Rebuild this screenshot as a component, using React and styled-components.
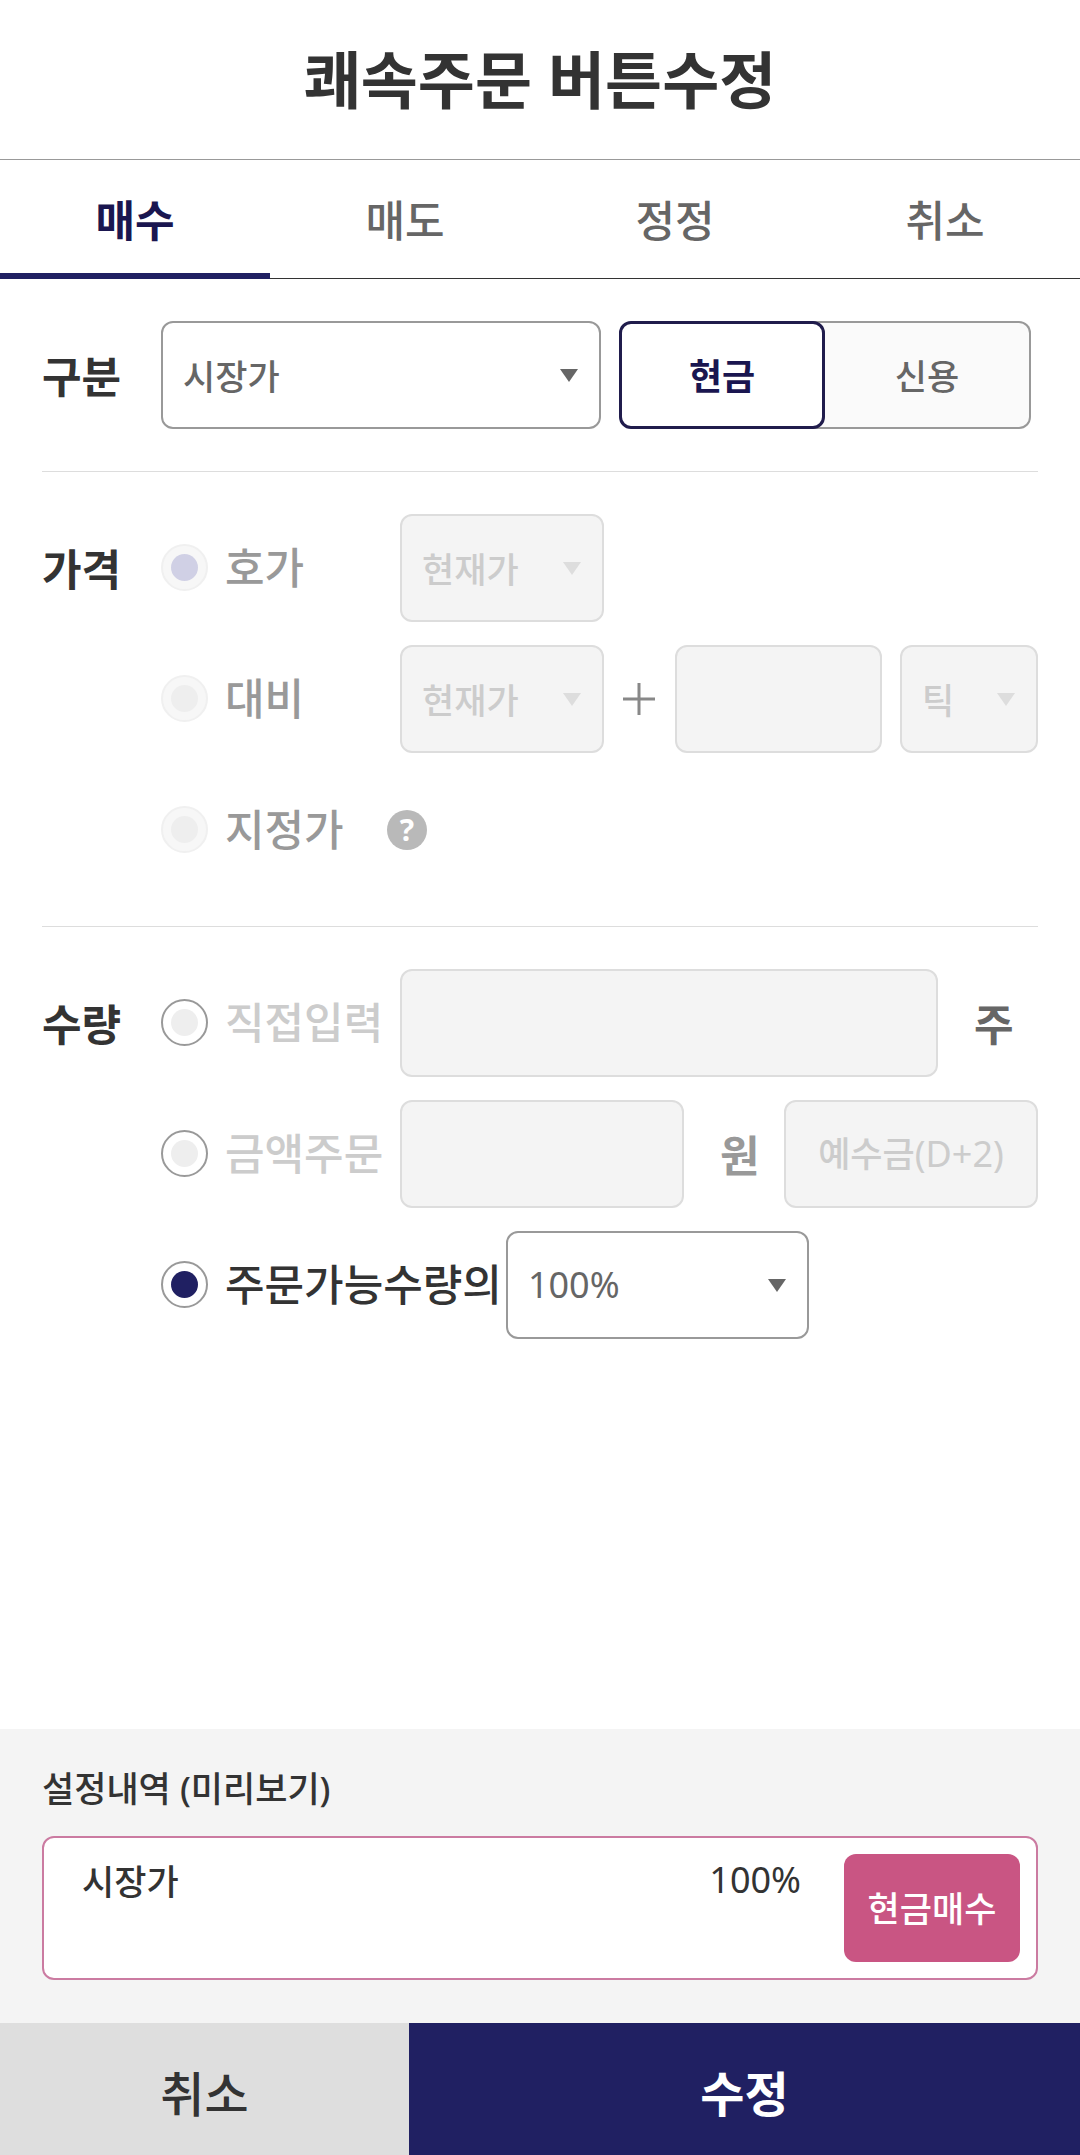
import React, { useState } from "react";
import styled, { createGlobalStyle, css } from "styled-components";

const GlobalStyle = createGlobalStyle`
  *, *::before, *::after { box-sizing: border-box; }
  body {
    margin: 0;
    background: #fff;
    color: #333;
    font-family: "Noto Sans", "Noto Sans CJK KR", sans-serif;
    font-size: 35px;
  }
  button, input, select { font: inherit; color: inherit; margin: 0; }
  button { cursor: pointer; }
`;

const Screen = styled.div`
  display: flex;
  flex-direction: column;
  min-height: 100vh;
`;

const Header = styled.header`
  display: flex;
  align-items: center;
  justify-content: center;
  height: 160px;
  border-bottom: 1px solid #999;
`;

const Title = styled.h1`
  margin: 0;
  font-size: 62px;
  line-height: 72px;
  font-weight: 700;
`;

const Tabs = styled.nav`
  display: grid;
  grid-template-columns: repeat(4, 1fr);
  height: 119px;
`;

const Tab = styled.button`
  border: 0;
  border-bottom: ${(p) => (p.$active ? "6px solid #202062" : "1px solid #333")};
  padding: ${(p) => (p.$active ? "4px 0 0" : "0 0 1px")};
  background: none;
  && {
    font-size: 43px;
    font-weight: ${(p) => (p.$active ? 700 : 500)};
    color: ${(p) => (p.$active ? "#1a1650" : "#666")};
  }
`;

const Form = styled.main`
  flex: 1;
  padding: 0 42px;
`;

const Section = styled.section`
  display: grid;
  grid-template-columns: 119px minmax(0, 1fr);
  padding: 42px 0;
  & + & { border-top: 1px solid #ddd; }
`;

const SectionTitle = styled.h2`
  margin: 0;
  padding-top: 2px;
  font-size: 43px;
  line-height: 108px;
  height: 108px;
  font-weight: 700;
`;

const Rows = styled.div`
  display: flex;
  flex-direction: column;
  gap: 23px;
`;

const Row = styled.div`
  display: flex;
  align-items: center;
  height: 108px;
`;

const field = css`
  width: 100%;
  height: 108px;
  border: 2px solid #999;
  border-radius: 12px;
  background: #fff;
  color: #666;
  &:disabled {
    border-color: #ddd;
    background: #f4f4f4;
    color: #ccc;
    opacity: 1;
    cursor: default;
  }
`;

const SelectBox = styled.div`
  display: grid;
  align-items: center;
  flex: ${(p) => (p.$width ? `0 0 ${p.$width}px` : "1 1 0")};
  margin-left: ${(p) => p.$gap || 0}px;
  & > * { grid-area: 1 / 1; }
`;

const StyledSelect = styled.select`
  ${field}
  appearance: none;
  padding: ${(p) => (p.$numeric ? "0 44px 2px 20px" : "2px 44px 0 20px")};
  && {
    font-size: ${(p) => (p.$numeric ? 36 : 35)}px;
    font-weight: ${(p) => (p.$numeric ? 400 : 500)};
  }
`;

const Arrow = styled.svg`
  justify-self: end;
  width: 18px;
  height: 13px;
  margin-right: 23px;
  fill: ${(p) => (p.$disabled ? "#ddd" : "#666")};
  pointer-events: none;
`;

const TextInput = styled.input`
  ${field}
  flex: 1 1 0;
  width: 0;
  min-width: 0;
  padding: 0 22px;
`;

const BalanceButton = styled.button`
  ${field}
  flex: 0 0 254px;
  padding: 0 0 4px;
  font-weight: 500;
`;

const Latin = styled.span`
  font-size: 36px;
  font-weight: 400;
`;

const Segments = styled.div`
  display: grid;
  grid-template-columns: 1fr 1fr;
  flex: 0 0 412px;
  margin: 0 7px 0 18px;
`;

const Segment = styled.button`
  height: 108px;
  border: 2px solid #999;
  ${(p) =>
    p.$first
      ? css`
          margin-right: -12px;
          padding: 0 12px 2px 0;
          border-right: 0;
          border-radius: 12px 0 0 12px;
        `
      : css`
          margin-left: -12px;
          padding: 0 0 2px 12px;
          border-left: 0;
          border-radius: 0 12px 12px 0;
        `}
  && {
    background: #fafafa;
    font-weight: 500;
    color: #666;
  }
  ${(p) =>
    p.$active &&
    css`
      && {
        z-index: 1;
        margin: 0;
        padding: 0 0 2px;
        background: #fff;
        border: 3px solid #201c4c;
        border-radius: 12px;
        font-size: 36px;
        font-weight: 700;
        color: #1a1650;
      }
    `}
`;

const Option = styled.label`
  display: flex;
  align-items: center;
  gap: 17px;
  flex: ${(p) => (p.$auto ? "0 0 auto" : "0 0 239px")};
  margin-right: ${(p) => (p.$auto ? 4 : 0)}px;
  padding-bottom: 2px;
  font-size: 43px;
  font-weight: 500;
  white-space: nowrap;
  color: ${(p) => p.$color};
`;

const OptionText = styled.span`
  padding-bottom: 3px;
`;

const Radio = styled.input`
  appearance: none;
  display: grid;
  place-items: center;
  flex: none;
  width: 47px;
  height: 47px;
  border: 2px solid #999;
  border-radius: 50%;
  background: #fff;
  &::before {
    content: "";
    width: 27px;
    height: 27px;
    border-radius: 50%;
    background: #eee;
  }
  &:checked::before { background: #202062; }
  &:disabled { border-color: #f0f0f0; background: #f7f7f7; }
  &:disabled:checked::before { background: #d0d0e5; }
`;

const PlusIcon = styled.svg`
  flex: none;
  width: 32px;
  height: 32px;
  margin: 0 20px 0 19px;
  stroke: #888;
  stroke-width: 3;
`;

const HelpButton = styled.button`
  display: grid;
  place-items: center;
  width: 40px;
  height: 40px;
  margin-left: -13px;
  padding: 0;
  border: 0;
  border-radius: 50%;
  background: #b9b9b9;
  && { color: #fff; font-size: 30px; font-weight: 700; line-height: 40px; }
`;

const Unit = styled.span`
  flex: none;
  width: 100px;
  padding: 0 0 2px 36px;
  font-size: 43px;
  font-weight: 700;
  color: ${(p) => p.$color};
`;

const Preview = styled.section`
  padding: 34px 42px 43px;
  background: #f4f4f4;
`;

const PreviewTitle = styled.h2`
  margin: 0 0 21px;
  font-size: 35px;
  line-height: 52px;
  font-weight: 500;
`;

const PreviewCard = styled.div`
  display: flex;
  align-items: flex-start;
  height: 144px;
  padding: 16px;
  border: 2px solid #cb7ba1;
  border-radius: 12px;
  background: #fff;
  line-height: 52px;
`;

const PreviewType = styled.span`
  flex: 1;
  padding: 2px 0 0 22px;
  font-weight: 500;
`;

const PreviewAmount = styled.span`
  margin-right: 43px;
  font-size: 36px;
`;

const OrderButton = styled.button`
  width: 176px;
  height: 108px;
  padding: 2px 0 0;
  border: 0;
  border-radius: 12px;
  background: #c95583;
  && { color: #fff; font-weight: 500; }
`;

const Actions = styled.footer`
  display: grid;
  grid-template-columns: 39fr 64fr;
`;

const ActionButton = styled.button`
  height: 132px;
  padding: 4px 0 0;
  border: 0;
  background: ${(p) => (p.$primary ? "#202062" : "#dedede")};
  && {
    font-size: 48px;
    font-weight: ${(p) => (p.$primary ? 700 : 500)};
    color: ${(p) => (p.$primary ? "#fff" : "#333")};
  }
`;

function Select({ label, options, width, gap, disabled, numeric }) {
  return (
    <SelectBox $width={width} $gap={gap}>
      <StyledSelect aria-label={label} disabled={disabled} $numeric={numeric}>
        {options.map((o) => (
          <option key={o}>{o}</option>
        ))}
      </StyledSelect>
      <Arrow $disabled={disabled} viewBox="0 0 18 13" aria-hidden="true">
        <path d="M0 0h18L9 13z" />
      </Arrow>
    </SelectBox>
  );
}

const TABS = ["매수", "매도", "정정", "취소"];
const FUNDS = ["현금", "신용"];

export default function App() {
  const [tab, setTab] = useState("매수");
  const [fund, setFund] = useState("현금");
  const [amount, setAmount] = useState("ratio");

  const amountRadio = (value) => (
    <Radio
      type="radio"
      name="amount"
      checked={amount === value}
      onChange={() => setAmount(value)}
    />
  );

  return (
    <Screen>
      <GlobalStyle />
      <Header>
        <Title>쾌속주문 버튼수정</Title>
      </Header>
      <Tabs>
        {TABS.map((t) => (
          <Tab key={t} type="button" $active={t === tab} onClick={() => setTab(t)}>
            {t}
          </Tab>
        ))}
      </Tabs>

      <Form>
        <Section>
          <SectionTitle>구분</SectionTitle>
          <Row>
            <Select label="구분" options={["시장가"]} />
            <Segments>
              {FUNDS.map((f, i) => (
                <Segment
                  key={f}
                  type="button"
                  aria-pressed={f === fund}
                  $first={i === 0}
                  $active={f === fund}
                  onClick={() => setFund(f)}
                >
                  {f}
                </Segment>
              ))}
            </Segments>
          </Row>
        </Section>

        <Section>
          <SectionTitle>가격</SectionTitle>
          <Rows>
            <Row>
              <Option $color="#999">
                <Radio type="radio" name="price" defaultChecked disabled />
                <OptionText>호가</OptionText>
              </Option>
              <Select label="호가 기준" options={["현재가"]} width={204} disabled />
            </Row>
            <Row>
              <Option $color="#999">
                <Radio type="radio" name="price" disabled />
                <OptionText>대비</OptionText>
              </Option>
              <Select label="대비 기준" options={["현재가"]} width={204} disabled />
              <PlusIcon viewBox="0 0 32 32" aria-hidden="true">
                <path d="M0 16h32M16 0v32" />
              </PlusIcon>
              <TextInput aria-label="대비 값" disabled />
              <Select label="대비 단위" options={["틱"]} width={138} gap={18} disabled />
            </Row>
            <Row>
              <Option $color="#999">
                <Radio type="radio" name="price" disabled />
                <OptionText>지정가</OptionText>
              </Option>
              <HelpButton type="button">?</HelpButton>
            </Row>
          </Rows>
        </Section>

        <Section>
          <SectionTitle>수량</SectionTitle>
          <Rows>
            <Row>
              <Option $color="#ccc">
                {amountRadio("direct")}
                <OptionText>직접입력</OptionText>
              </Option>
              <TextInput aria-label="수량" disabled />
              <Unit $color="#666">주</Unit>
            </Row>
            <Row>
              <Option $color="#ccc">
                {amountRadio("cash")}
                <OptionText>금액주문</OptionText>
              </Option>
              <TextInput aria-label="금액" disabled />
              <Unit $color="#999">원</Unit>
              <BalanceButton type="button" disabled>
                예수금<Latin>(D+2)</Latin>
              </BalanceButton>
            </Row>
            <Row>
              <Option $color="#333" $auto>
                {amountRadio("ratio")}
                <OptionText>주문가능수량의</OptionText>
              </Option>
              <Select label="주문가능수량 비율" options={["100%"]} width={303} numeric />
            </Row>
          </Rows>
        </Section>
      </Form>

      <Preview>
        <PreviewTitle>설정내역 (미리보기)</PreviewTitle>
        <PreviewCard>
          <PreviewType>시장가</PreviewType>
          <PreviewAmount>100%</PreviewAmount>
          <OrderButton type="button">현금매수</OrderButton>
        </PreviewCard>
      </Preview>

      <Actions>
        <ActionButton type="button">취소</ActionButton>
        <ActionButton type="button" $primary>
          수정
        </ActionButton>
      </Actions>
    </Screen>
  );
}
